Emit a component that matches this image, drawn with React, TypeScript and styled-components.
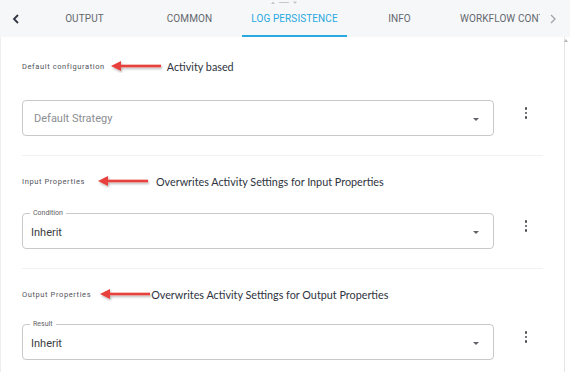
import styled, { createGlobalStyle } from 'styled-components';

const GlobalStyle = createGlobalStyle`
  html, body {
    margin: 0;
    padding: 0;
    background: #ffffff;
  }
  body {
    font-family: Roboto, "Liberation Sans", sans-serif;
  }
`;

const tabs = ['OUTPUT', 'COMMON', 'LOG PERSISTENCE', 'INFO', 'WORKFLOW CONTEXT'];

const sections = [
  { label: 'Default configuration', note: 'Activity based', legend: '', value: 'Default Strategy', placeholder: true, top: 19, gap: 24, arrowGap: 7, noteGap: 5 },
  { label: 'Input Properties', note: 'Overwrites Activity Settings for Input Properties', legend: 'Condition', value: 'Inherit', placeholder: false, top: 15, gap: 22, arrowGap: 14, noteGap: 7 },
  { label: 'Output Properties', note: 'Overwrites Activity Settings for Output Properties', legend: 'Result', value: 'Inherit', placeholder: false, top: 15, gap: 20, arrowGap: 10, noteGap: 0 },
];

function Arrow() {
  return (
    <ArrowSvg width="54" height="14" viewBox="0 0 54 14">
      <defs>
        <filter id="arrowShadow" x="-20%" y="-50%" width="140%" height="200%">
          <feDropShadow dx="1" dy="1.5" stdDeviation="1" floodColor="#000" floodOpacity="0.3" />
        </filter>
      </defs>
      <g filter="url(#arrowShadow)" fill="#e8403c">
        <rect x="9" y="5.7" width="42" height="2.6" />
        <polygon points="1,7 11,2 11,12" />
      </g>
    </ArrowSvg>
  );
}

export default function App() {
  return (
    <Frame>
      <GlobalStyle />
      <TabBar>
        <Handle>
          <svg width="30" height="5" viewBox="0 0 30 5">
            <polygon points="1,4 3,1.5 5,4" fill="#c4c7cc" />
            <rect x="9" y="2" width="10" height="1" fill="#c4c7cc" />
            <polygon points="23,1.5 25,4 27,1.5" fill="#c4c7cc" />
          </svg>
        </Handle>
        <Chevron>
          <svg width="8" height="10" viewBox="0 0 8 10">
            <polyline points="6,1 2,5 6,9" fill="none" stroke="#2f3440" strokeWidth="1.8" />
          </svg>
        </Chevron>
        <TabViewport>
          {tabs.map((t) => (
            <Tab key={t} $active={t === 'LOG PERSISTENCE'}>{t}</Tab>
          ))}
        </TabViewport>
        <Chevron $right>
          <svg width="8" height="10" viewBox="0 0 8 10">
            <polyline points="2,1 6,5 2,9" fill="none" stroke="#a0a4aa" strokeWidth="1.3" />
          </svg>
        </Chevron>
      </TabBar>
      <Body>
        <Content>
          {sections.map((s, i) => (
            <Section key={s.label} $top={s.top} $gap={s.gap} $last={i === sections.length - 1}>
              <HeaderRow>
                <SectionLabel>{s.label}</SectionLabel>
                <ArrowWrap $left={s.arrowGap} $right={s.noteGap}>
                  <Arrow />
                </ArrowWrap>
                <Note>{s.note}</Note>
              </HeaderRow>
              <FieldRow>
                <SelectBox>
                  {s.legend && <Legend>{s.legend}</Legend>}
                  <SelectValue $placeholder={s.placeholder}>{s.value}</SelectValue>
                  <Caret />
                </SelectBox>
                <Kebab>
                  <Dot />
                  <Dot />
                  <Dot />
                </Kebab>
              </FieldRow>
            </Section>
          ))}
        </Content>
        <Scrollbar>
          <ScrollArrow />
        </Scrollbar>
      </Body>
    </Frame>
  );
}

const Frame = styled.div`
  width: 570px;
  height: 372px;
  overflow: hidden;
  display: flex;
  flex-direction: column;
  background: #ffffff;
`;

const TabBar = styled.div`
  position: relative;
  height: 37px;
  display: flex;
  align-items: stretch;
  background: #f6f7f9;
  flex-shrink: 0;
`;

const Handle = styled.div`
  position: absolute;
  top: 0;
  left: 270px;
  line-height: 0;
`;

const Chevron = styled.div<{ $right?: boolean }>`
  width: ${(p) => (p.$right ? '30px' : '32px')};
  display: flex;
  align-items: center;
  justify-content: ${(p) => (p.$right ? 'flex-start' : 'center')};
  padding-left: ${(p) => (p.$right ? '9px' : '0')};
  padding-top: 1px;
  box-sizing: border-box;
`;

const TabViewport = styled.div`
  flex: 1;
  display: flex;
  overflow: hidden;
  white-space: nowrap;
`;

const Tab = styled.div<{ $active?: boolean }>`
  min-width: 105px;
  box-sizing: border-box;
  padding: 2px 8px 0;
  flex-shrink: 0;
  display: flex;
  align-items: center;
  justify-content: center;
  font-size: 10px;
  letter-spacing: 0.1px;
  color: ${(p) => (p.$active ? '#2aa8e0' : '#63676d')};
  border-bottom: 2px solid ${(p) => (p.$active ? '#2aa8e0' : 'transparent')};
`;

const Body = styled.div`
  flex: 1;
  display: flex;
  border-left: 1px solid #eeeeee;
`;

const Content = styled.div`
  flex: 1;
  padding-left: 21px;
`;

const Scrollbar = styled.div`
  width: 5px;
  border-left: 1px solid #e4e4e4;
  display: flex;
  justify-content: center;
  padding-top: 2px;
`;

const ScrollArrow = styled.div`
  width: 0;
  height: 0;
  border-left: 2px solid transparent;
  border-right: 2px solid transparent;
  border-bottom: 3px solid #b8b8b8;
  margin-left: -4px;
`;

const Section = styled.div<{ $top: number; $gap: number; $last?: boolean }>`
  width: 521px;
  padding-top: ${(p) => p.$top}px;
  padding-bottom: 19px;
  border-bottom: 1px solid ${(p) => (p.$last ? 'transparent' : '#f1f1f1')};
  display: flex;
  flex-direction: column;
  gap: ${(p) => p.$gap}px;
`;

const HeaderRow = styled.div`
  height: 20px;
  display: flex;
  align-items: center;
`;

const SectionLabel = styled.span`
  font-size: 7.5px;
  letter-spacing: 0.6px;
  color: #50535a;
`;

const ArrowWrap = styled.span<{ $left: number; $right: number }>`
  margin-left: ${(p) => p.$left - 2}px;
  margin-right: ${(p) => p.$right - 2}px;
  line-height: 0;
`;

const ArrowSvg = styled.svg`
  display: block;
`;

const Note = styled.span`
  font-family: Lato, "Open Sans", sans-serif;
  font-size: 10.8px;
  color: #2e3440;
`;

const FieldRow = styled.div`
  display: flex;
  align-items: center;
`;

const SelectBox = styled.div`
  position: relative;
  width: 472px;
  height: 36px;
  box-sizing: border-box;
  border: 1px solid #c9c9c9;
  border-radius: 4px;
  display: flex;
  align-items: center;
`;

const Legend = styled.span`
  position: absolute;
  top: -5px;
  left: 7px;
  padding: 0 3px;
  background: #ffffff;
  font-size: 7px;
  line-height: 9px;
  color: #5f6266;
`;

const SelectValue = styled.span<{ $placeholder?: boolean }>`
  flex: 1;
  padding-left: ${(p) => (p.$placeholder ? '11px' : '8px')};
  padding-top: ${(p) => (p.$placeholder ? '0' : '3px')};
  font-size: 11px;
  color: ${(p) => (p.$placeholder ? '#8b8e93' : '#3a3d42')};
`;

const Caret = styled.span`
  width: 0;
  height: 0;
  border-left: 3.5px solid transparent;
  border-right: 3.5px solid transparent;
  border-top: 3.5px solid #5f6266;
  margin-right: 14px;
  margin-top: 2px;
`;

const Kebab = styled.div`
  width: 24px;
  margin-left: 20px;
  margin-top: -10px;
  display: flex;
  flex-direction: column;
  align-items: center;
  gap: 2px;
`;

const Dot = styled.span`
  width: 2.5px;
  height: 2.5px;
  border-radius: 50%;
  background: #4a4d52;
`;
